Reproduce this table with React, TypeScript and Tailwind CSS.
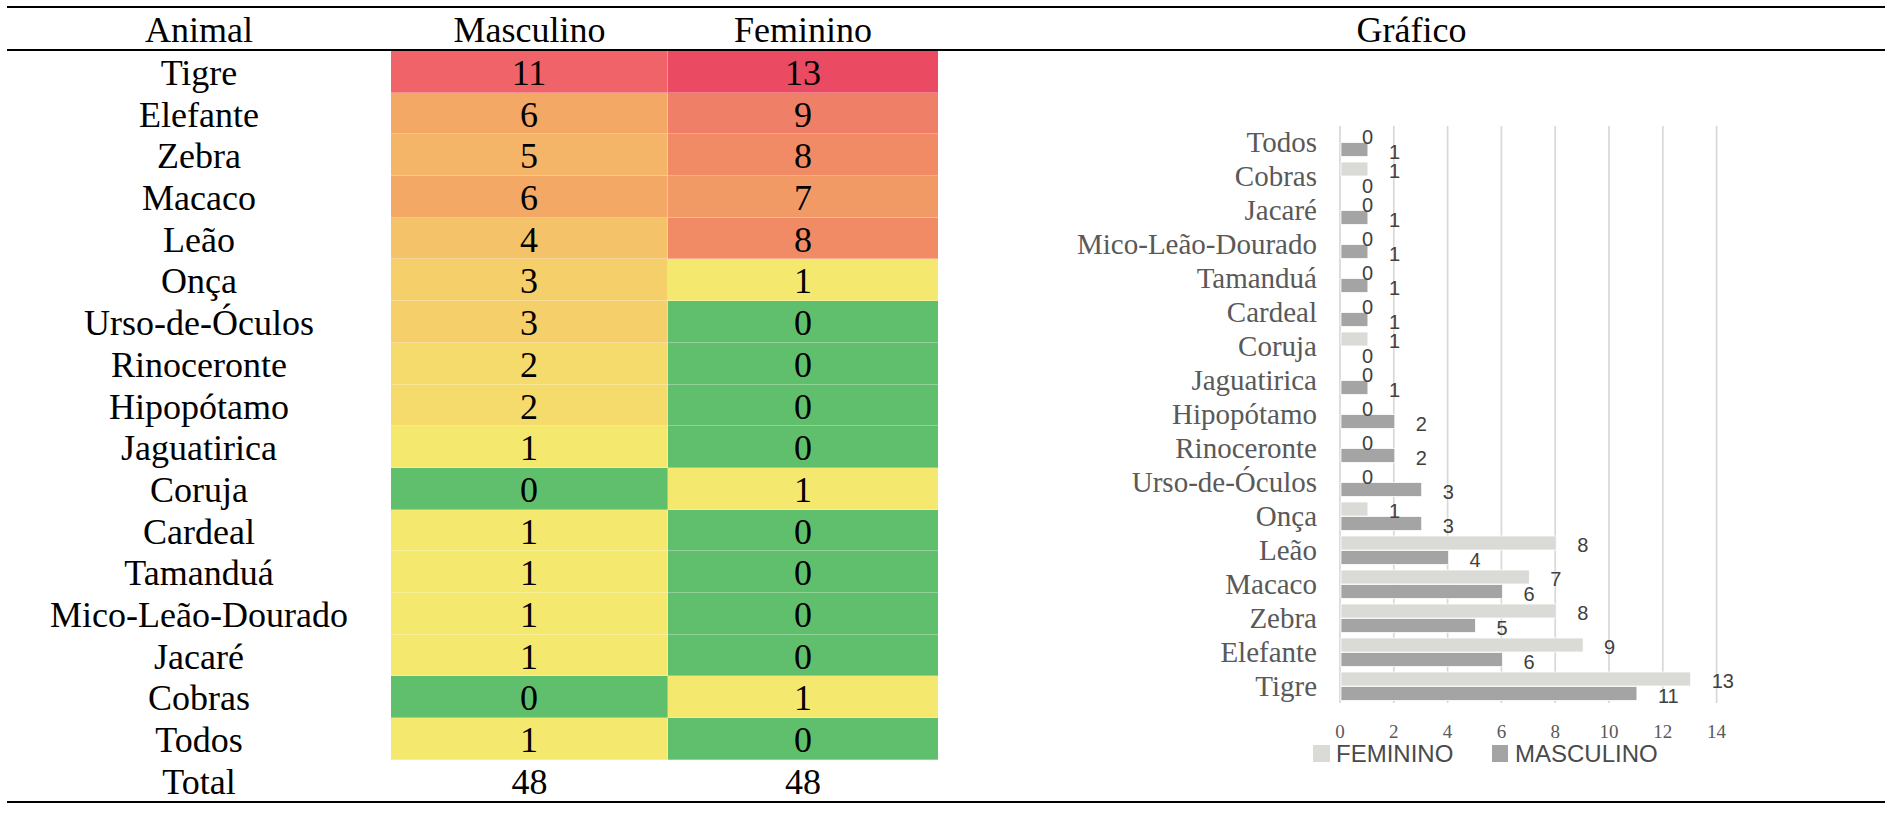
type Row = { name: string; m: number; f: number };

const rows: Row[] = [
  { name: "Tigre", m: 11, f: 13 },
  { name: "Elefante", m: 6, f: 9 },
  { name: "Zebra", m: 5, f: 8 },
  { name: "Macaco", m: 6, f: 7 },
  { name: "Leão", m: 4, f: 8 },
  { name: "Onça", m: 3, f: 1 },
  { name: "Urso-de-Óculos", m: 3, f: 0 },
  { name: "Rinoceronte", m: 2, f: 0 },
  { name: "Hipopótamo", m: 2, f: 0 },
  { name: "Jaguatirica", m: 1, f: 0 },
  { name: "Coruja", m: 0, f: 1 },
  { name: "Cardeal", m: 1, f: 0 },
  { name: "Tamanduá", m: 1, f: 0 },
  { name: "Mico-Leão-Dourado", m: 1, f: 0 },
  { name: "Jacaré", m: 1, f: 0 },
  { name: "Cobras", m: 0, f: 1 },
  { name: "Todos", m: 1, f: 0 },
];

// color scale: green (0) -> yellow (1) -> red (13)
const heat: Record<number, string> = {
  0: "bg-[#60bf6c]",
  1: "bg-[#f5e86e]",
  2: "bg-[#f5db6b]",
  3: "bg-[#f4cf6a]",
  4: "bg-[#f4c268]",
  5: "bg-[#f4b568]",
  6: "bg-[#f3a866]",
  7: "bg-[#f29a66]",
  8: "bg-[#f18b66]",
  9: "bg-[#f07f68]",
  11: "bg-[#f06469]",
  13: "bg-[#ea4a62]",
};

const X0 = 1340;
const UNIT = 26.9;
const TOP = 125;
const BAND = 34;

function Chart() {
  const chartRows = [...rows].reverse();
  return (
    <svg width={947} height={750} viewBox="938 51 947 750" className="block">
      {[0, 1, 2, 3, 4, 5, 6, 7].map((k) => (
        <line
          key={k}
          x1={X0 + k * 2 * UNIT}
          x2={X0 + k * 2 * UNIT}
          y1={126}
          y2={703}
          stroke="#d9d9d9"
          strokeWidth={1.75}
        />
      ))}
      {chartRows.map((r, i) => {
        const top = TOP + i * BAND;
        const fy = top + 3;
        const my = top + 17.5;
        return (
          <g key={r.name}>
            <text
              x={1317}
              y={top + 17 + 9.6}
              textAnchor="end"
              fontFamily="'Liberation Serif', serif"
              fontSize={29}
              fill="#595959"
            >
              {r.name}
            </text>
            {r.f > 0 && (
              <rect x={X0 + 1} y={fy} width={r.f * UNIT} height={14} fill="#dadad6" stroke="#ffffff" strokeWidth={0.75} />
            )}
            {r.m > 0 && (
              <rect x={X0 + 1} y={my} width={r.m * UNIT} height={14} fill="#a4a4a4" stroke="#ffffff" strokeWidth={0.75} />
            )}
            <text
              x={X0 + r.f * UNIT + 22}
              y={fy + 7 + 9}
              fontFamily="'Liberation Sans', sans-serif"
              fontSize={20}
              fill="#404040"
            >
              {r.f}
            </text>
            <text
              x={X0 + r.m * UNIT + 22}
              y={my + 7 + 9}
              fontFamily="'Liberation Sans', sans-serif"
              fontSize={20}
              fill="#404040"
            >
              {r.m}
            </text>
          </g>
        );
      })}
      {[0, 2, 4, 6, 8, 10, 12, 14].map((v) => (
        <text
          key={v}
          x={X0 + v * UNIT}
          y={738}
          textAnchor="middle"
          fontFamily="'Liberation Serif', serif"
          fontSize={19}
          fill="#595959"
        >
          {v}
        </text>
      ))}
      {/* legend */}
      <rect x={1313} y={745} width={17} height={17} fill="#dadad6" />
      <text x={1336} y={762} fontFamily="'Liberation Sans', sans-serif" fontSize={24} fill="#4a4a4a">
        FEMININO
      </text>
      <rect x={1492} y={745} width={16} height={17} fill="#a4a4a4" />
      <text x={1515} y={762} fontFamily="'Liberation Sans', sans-serif" fontSize={24} fill="#4a4a4a">
        MASCULINO
      </text>
    </svg>
  );
}

export default function App() {
  return (
    <div className="min-h-screen bg-white pl-[7px] pt-[6px]">
      <div className="w-[1878px] border-y-2 border-black font-['Liberation_Serif',serif] text-[36px] text-black">
        {/* header */}
        <div className="flex h-[43px] border-b-2 border-black pt-[2px] leading-[41px]">
          <div className="w-[384px] text-center">Animal</div>
          <div className="w-[277px] text-center">Masculino</div>
          <div className="w-[270px] text-center">Feminino</div>
          <div className="w-[947px] text-center">Gráfico</div>
        </div>

        {/* body */}
        <div className="flex">
          <div className="flex w-[931px] flex-col">
            {rows.map((r) => (
              <div key={r.name} className="flex h-[41.7px] leading-[41.7px]">
                <div className="w-[384px] pt-[2px] text-center">{r.name}</div>
                <div className={`w-[277px] border-b border-r border-white/30 pt-[2px] text-center ${heat[r.m]}`}>{r.m}</div>
                <div className={`w-[270px] border-b border-white/30 pt-[2px] text-center ${heat[r.f]}`}>{r.f}</div>
              </div>
            ))}
            <div className="flex h-[41px] pt-[2px] leading-[41px]">
              <div className="w-[384px] text-center">Total</div>
              <div className="w-[277px] text-center">48</div>
              <div className="w-[270px] text-center">48</div>
            </div>
          </div>
          <Chart />
        </div>
      </div>
    </div>
  );
}
